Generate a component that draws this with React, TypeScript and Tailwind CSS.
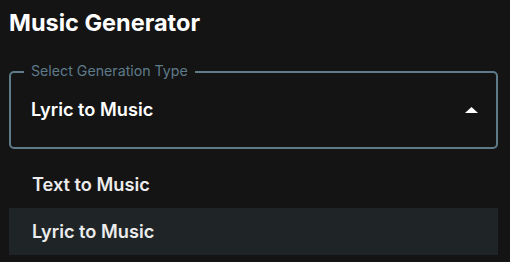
export default function App() {
  return (
    <div className="h-[262px] w-[510px] overflow-hidden bg-[#141414] font-['Inter',sans-serif] text-white">
      <h1 className="pl-[9px] pt-[8px] text-[23.5px] font-bold leading-[30px]">
        Music Generator
      </h1>

      {/* Select box */}
      <div className="relative ml-[9px] mt-[33px] flex h-[78px] w-[489px] items-center justify-between rounded-[5px] border-2 border-[#5e7b8a] pl-[20px] pr-[18px]">
        <span className="absolute left-[13px] top-[-11px] bg-[#141414] px-[7px] text-[14.2px] leading-[18px] text-[#5e7b8a]">
          Select Generation Type
        </span>
        <span className="text-[18.2px] font-semibold">Lyric to Music</span>
        <svg width="13" height="6" viewBox="0 0 13 6">
          <path d="M0 6 L6.5 0 L13 6 Z" fill="white" />
        </svg>
      </div>

      {/* Menu */}
      <div className="ml-[9px] mt-[12px] flex w-[489px] flex-col">
        <div className="flex h-[47px] items-center pl-[23px] text-[18.2px] font-semibold text-[#ececec]">
          Text to Music
        </div>
        <div className="flex h-[47px] items-center bg-[#1f2427] pl-[23px] text-[18.2px] font-semibold text-[#ececec]">
          Lyric to Music
        </div>
      </div>
    </div>
  );
}
